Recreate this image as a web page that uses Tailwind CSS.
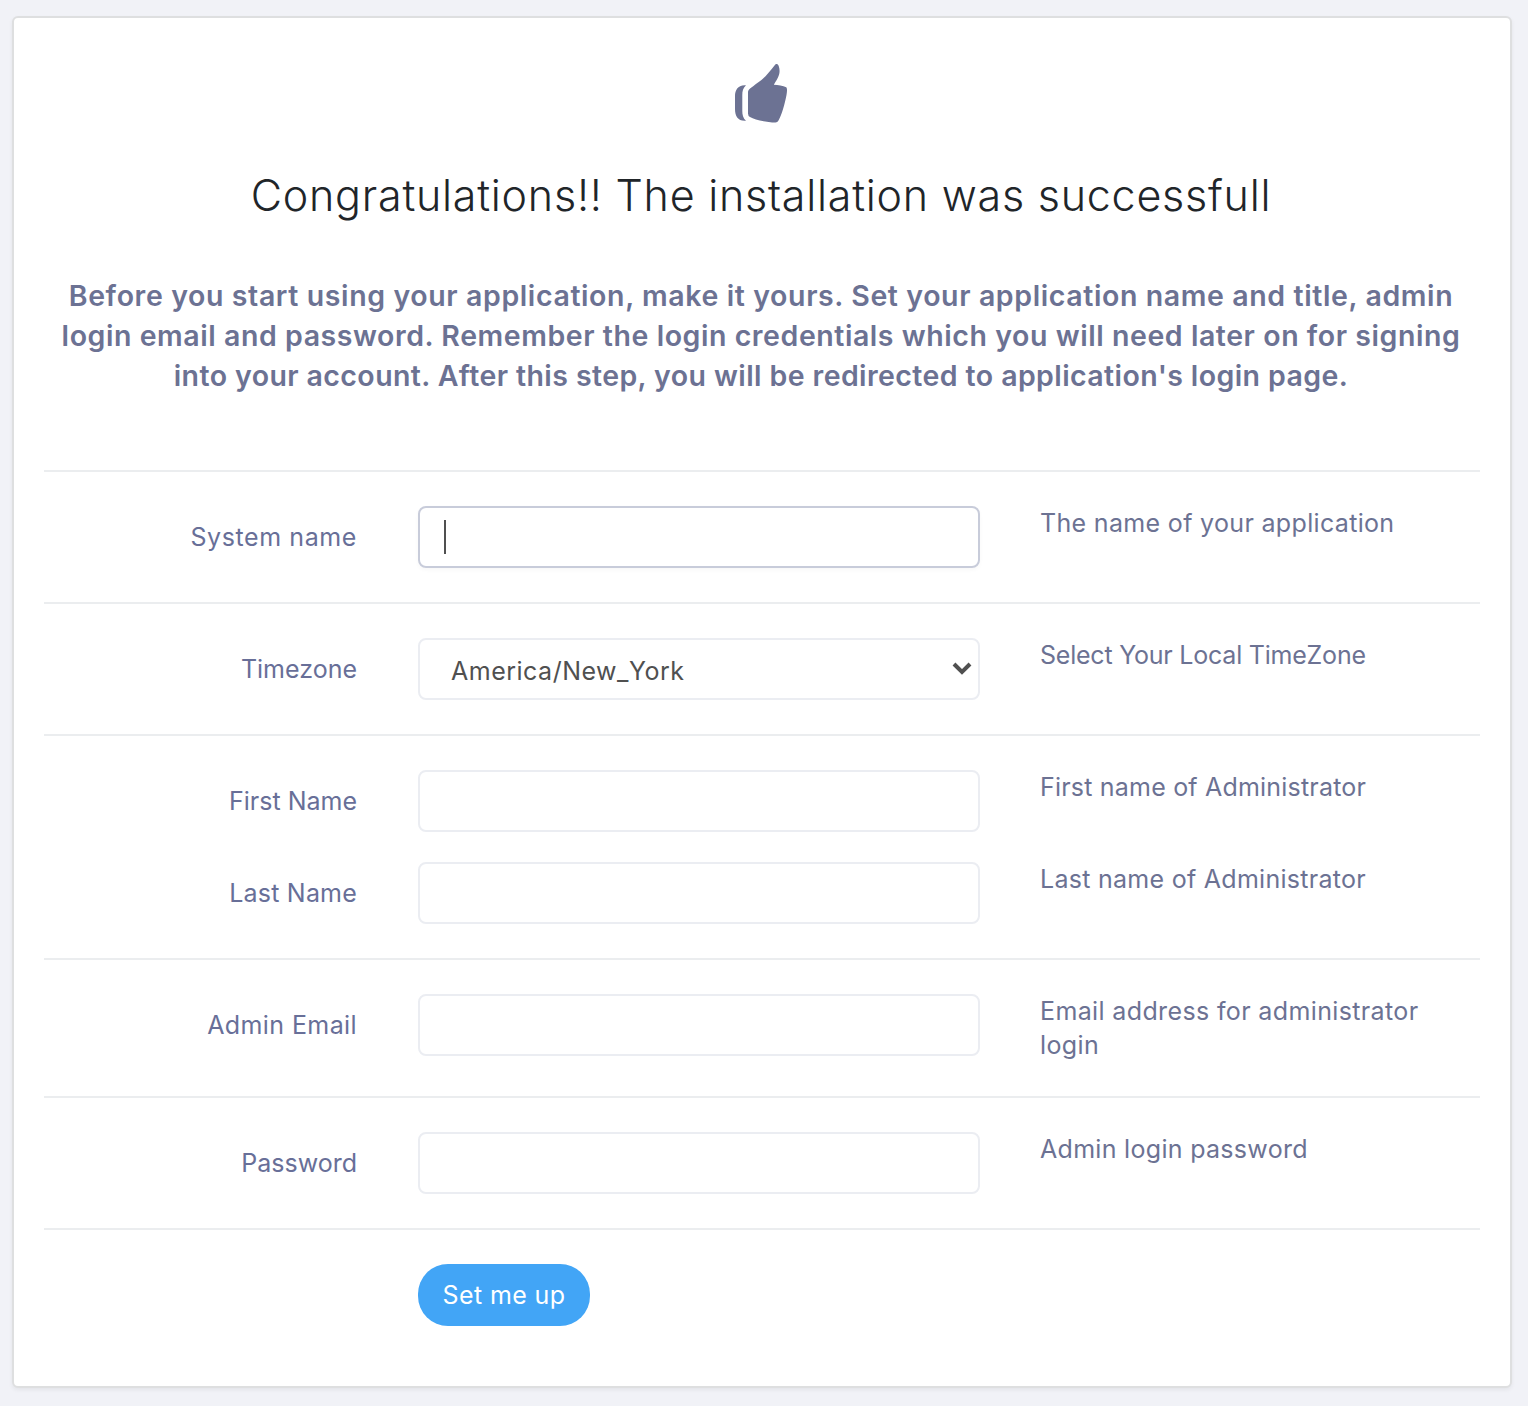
<!DOCTYPE html>
<html lang="en">
<head>
<meta charset="utf-8">
<title>Installation</title>
<script src="https://cdn.jsdelivr.net/npm/@tailwindcss/browser@4"></script>
</head>
<body class="bg-[#f1f2f7] h-[1406px] overflow-hidden font-['Inter',sans-serif] text-[#6c7293] pt-4 pl-3">
<main class="w-[1500px] h-[1372px] bg-white border-2 border-[#dedfe0] rounded-md shadow-[0_2px_4px_rgba(0,0,0,0.06)] px-[30px] flex flex-col">
  <header class="flex flex-col items-center text-center pr-[2px]">
    <svg class="mt-[46px] w-[54px] h-[60px]" viewBox="734 64 54 60" fill="#6c7293">
      <path d="M748 92.500C748 89 751 88 758 82.500C765 78 770 71 774.500 65.500C776 63.500 777.500 63.500 778.700 66C781.500 74 777 79 773.800 84.800C778 85 783 86 786.200 87.300C787.500 88.500 787 92 786.500 95C784.500 105 782 114 778.500 120.500Q777.500 122.500 775.500 122.500C766 122.200 755 119.800 750 117Q748 116 748 113.500Z"/>
      <path d="M746 85.200C738 84.500 735 90 735 96V109C735 116 738 121.500 746 120.800C743 118 742.300 115 742.300 111V95C742.300 91 743 88 746 85.200Z"/>
    </svg>
    <h1 class="mt-[41px] h-[60px] leading-[60px] text-[43px] font-[350] tracking-[0.76px] text-[#212529] whitespace-nowrap">Congratulations!! The installation was successfull</h1>
    <p class="mt-[51px] text-[28.5px] leading-10 font-semibold whitespace-nowrap"><span class="tracking-[0.61px]">Before you start using your application, make it yours. Set your application name and title, admin</span><br><span class="tracking-[0.56px]">login email and password. Remember the login credentials which you will need later on for signing</span><br><span class="tracking-[0.41px]">into your account. After this step, you will be redirected to application's login page.</span></p>
  </header>
  <form class="mt-[74px] text-[25px] leading-[34px]">
    <div class="h-[132px] border-t-2 border-[#ebedef] pt-[34px] grid grid-cols-[313px_562px_1fr]">
      <label for="system" class="h-[62px] leading-[62px] text-right tracking-[0.6px] text-[#686f98]">System name</label>
      <div class="ml-[61px] w-[562px] h-[62px] border-2 border-[#c8ccda] rounded-lg pl-6 pt-3 shadow-[0_2px_4px_rgba(0,0,0,0.03)]"><div class="w-0.5 h-[34px] bg-[#505050]"></div></div>
      <p class="pl-[121px] tracking-[0.33px]">The name of your application</p>
    </div>
    <div class="h-[132px] border-t-2 border-[#ebedef] pt-[34px] grid grid-cols-[313px_562px_1fr]">
      <label class="h-[62px] leading-[62px] text-right text-[#686f98]">Timezone</label>
      <div class="ml-[61px] w-[562px] h-[62px] border-2 border-[#ebedf2] rounded-lg pl-[31px] pr-[5px] pt-1 flex items-center justify-between text-[#505050]">
        <span class="tracking-[0.5px]">America/New_York</span>
        <svg class="w-[22px] h-4 -mt-1.5" viewBox="0 0 22 16" fill="none" stroke="#505050" stroke-width="4"><path d="M3 4L11 12L19 4"/></svg>
      </div>
      <p class="pl-[121px] tracking-[-0.22px]">Select Your Local TimeZone</p>
    </div>
    <div class="h-[224px] border-t-2 border-[#ebedef] pt-[34px] grid grid-cols-[313px_562px_1fr] auto-rows-[62px] gap-y-[30px]">
      <label for="first" class="leading-[62px] text-right text-[#686f98]">First Name</label>
      <input id="first" class="ml-[61px] w-[562px] h-[62px] border-2 border-[#ebedf2] rounded-lg px-6">
      <p class="pl-[121px] tracking-[0.2px]">First name of Administrator</p>
      <label for="last" class="leading-[62px] text-right tracking-[0.2px] text-[#686f98]">Last Name</label>
      <input id="last" class="ml-[61px] w-[562px] h-[62px] border-2 border-[#ebedf2] rounded-lg px-6">
      <p class="pl-[121px] tracking-[0.28px]">Last name of Administrator</p>
    </div>
    <div class="h-[138px] border-t-2 border-[#ebedef] pt-[34px] grid grid-cols-[313px_562px_1fr]">
      <label for="email" class="h-[62px] leading-[62px] text-right tracking-[0.4px] text-[#686f98]">Admin Email</label>
      <input id="email" class="ml-[61px] w-[562px] h-[62px] border-2 border-[#ebedf2] rounded-lg px-6">
      <p class="pl-[121px] tracking-[0.37px]">Email address for administrator<br>login</p>
    </div>
    <div class="h-[132px] border-t-2 border-[#ebedef] pt-[34px] grid grid-cols-[313px_562px_1fr]">
      <label for="password" class="h-[62px] leading-[62px] text-right text-[#686f98]">Password</label>
      <input id="password" type="password" class="ml-[61px] w-[562px] h-[62px] border-2 border-[#ebedf2] rounded-lg px-6">
      <p class="pl-[121px] tracking-[0.3px]">Admin login password</p>
    </div>
    <div class="border-t-2 border-[#ebedef] pt-[34px] pl-[374px]">
      <button type="button" class="block w-[172px] h-[62px] rounded-[30px] bg-[#42a5f6] text-white tracking-[0.4px] whitespace-nowrap">Set me up</button>
    </div>
  </form>
</main>
</body>
</html>
